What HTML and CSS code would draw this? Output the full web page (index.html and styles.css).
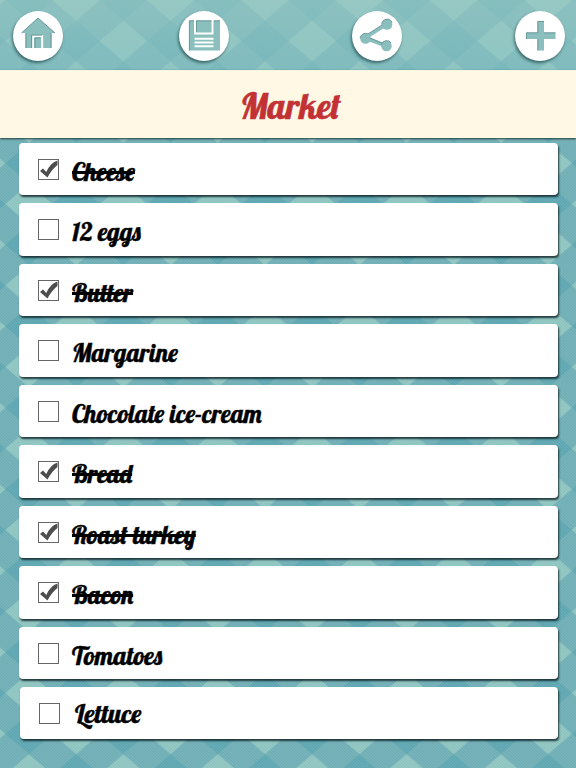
FILE: index.html
```html
<!DOCTYPE html>
<html lang="en">
<head>
<meta charset="utf-8">
<title>Market</title>
<link rel="stylesheet" href="styles.css">
</head>
<body>
<svg class="backdrop" width="576" height="768" aria-hidden="true">
  <defs>
    <pattern id="gingham" x="29" y="41" width="94.4" height="81.5" patternUnits="userSpaceOnUse" viewBox="0 0 94 82" preserveAspectRatio="none">
      <rect width="94" height="82" fill="#71afb6"/>
      <path fill="#8fc5c1" d="M47 20.500L70.500 41L47 61.500L23.500 41ZM0 0H23.500L0 20.500ZM94 0V20.500L70.500 0ZM0 82V61.500L23.500 82ZM94 82H70.500L94 61.500Z"/>
      <path fill="#5fa7b2" d="M23.500 0H70.500L47 20.500ZM23.500 82L47 61.500L70.500 82ZM0 20.500L23.500 41L0 61.500ZM94 20.500V61.500L70.500 41Z"/>
    </pattern>
    <pattern id="weave" width="3" height="3" patternUnits="userSpaceOnUse">
      <path d="M0 0L3 3" stroke="#fff" stroke-opacity=".09" stroke-width=".8"/>
    </pattern>
  </defs>
  <rect width="576" height="768" fill="url(#gingham)"/>
  <rect width="576" height="768" fill="url(#weave)"/>
</svg>
<header class="toolbar">
  <button class="tool" aria-label="Home"><svg viewBox="0 0 50 50"><path class="cut" d="M25 7L42 22H38.500V37H12.500V22H8.500Z"/><path class="frame" d="M20.200 37V25.200H29.200V37"/><path class="shade" d="M42 22L25 7L8.500 22M13 22V37M18.500 37V24H29M38 22V37M22 37V27H27.500"/></svg></button>
  <button class="tool" aria-label="Save"><svg viewBox="0 0 50 50"><path class="cut" d="M10 9.500H41V39.500H10Z"/><path class="frame" d="M16 8V22.500H33.500V8M15.500 27.700H34.500M15.500 31.500H34.500M15.500 35.300H34.500"/><path class="shade" d="M10.400 39.500V9.900H15M17.500 21V9.900H32.500M35 9.900H41"/></svg></button>
  <button class="tool" aria-label="Share"><svg viewBox="0 0 50 50"><g class="cut"><path class="link" d="M35 13L13 27L34.500 35"/><circle cx="35" cy="13.500" r="5.300"/><circle cx="13.500" cy="27.500" r="5.300"/><circle cx="34.500" cy="35" r="5.300"/></g><path class="shade" d="M29.800 13.500A5.300 5.300 0 0 1 40 11.500M8.200 27.500A5.300 5.300 0 0 1 16 23L30 14M29.500 33.500A5.300 5.300 0 0 1 39 32M18 27L30 32"/></svg></button>
  <button class="tool" aria-label="Add"><svg viewBox="0 0 50 50"><path class="cut" d="M22.500 10H29V21.500H40.500V28H29V39.500H22.500V28H11V21.500H22.500Z"/><path class="shade" d="M11.400 28V21.900H22.900V10.400H29M29 21.900H40.500M22.900 28V39.500"/></svg></button>
</header>
<h1 class="title">Market</h1>
<ul class="list">
  <li class="item done"><span class="box"><svg viewBox="0 0 21 21"><path d="M2 12L5 9.500L8.300 13Q12.500 3.500 19.500 1.500V6Q14 10 9.500 18.500Z"/></svg></span><span class="label">Cheese</span></li>
  <li class="item"><span class="box"></span><span class="label">12 eggs</span></li>
  <li class="item done"><span class="box"><svg viewBox="0 0 21 21"><path d="M2 12L5 9.500L8.300 13Q12.500 3.500 19.500 1.500V6Q14 10 9.500 18.500Z"/></svg></span><span class="label">Butter</span></li>
  <li class="item"><span class="box"></span><span class="label">Margarine</span></li>
  <li class="item"><span class="box"></span><span class="label">Chocolate ice-cream</span></li>
  <li class="item done"><span class="box"><svg viewBox="0 0 21 21"><path d="M2 12L5 9.500L8.300 13Q12.500 3.500 19.500 1.500V6Q14 10 9.500 18.500Z"/></svg></span><span class="label">Bread</span></li>
  <li class="item done"><span class="box"><svg viewBox="0 0 21 21"><path d="M2 12L5 9.500L8.300 13Q12.500 3.500 19.500 1.500V6Q14 10 9.500 18.500Z"/></svg></span><span class="label">Roast turkey</span></li>
  <li class="item done"><span class="box"><svg viewBox="0 0 21 21"><path d="M2 12L5 9.500L8.300 13Q12.500 3.500 19.500 1.500V6Q14 10 9.500 18.500Z"/></svg></span><span class="label">Bacon</span></li>
  <li class="item"><span class="box"></span><span class="label">Tomatoes</span></li>
  <li class="item last"><span class="box"></span><span class="label">Lettuce</span></li>
</ul>
</body>
</html>
```

FILE: styles.css
```css
* { box-sizing: border-box; }
body {
  margin: 0;
  width: 576px;
  height: 768px;
  overflow: hidden;
  font-family: Lobster, "Liberation Serif", serif;
  font-weight: normal;
}
.backdrop { position: absolute; inset: 0; z-index: -1; }
.toolbar {
  height: 70px;
  padding: 11px 11px 0 13px;
  display: grid;
  grid-template-columns: 166px 173px 163px 50px;
  background: linear-gradient(rgba(153, 201, 196, .66), rgba(140, 196, 195, .54));
}
.tool {
  width: 50px;
  height: 50px;
  padding: 0;
  border: 0;
  border-radius: 50%;
  background: #fff;
  box-shadow: -1px 2px 3px rgba(20, 60, 65, .65);
}
.tool svg { display: block; width: 50px; height: 50px; }
.cut { fill: #8bbfbe; }
.cut .link { fill: none; stroke: #8bbfbe; stroke-width: 3.5; }
.frame { fill: none; stroke: #fff; stroke-width: 1.9; }
.shade { fill: none; stroke: #6b9799; stroke-width: 1; }
.title {
  margin: 0;
  height: 68px;
  padding: 2px 0 0 5px;
  line-height: 68px;
  text-align: center;
  font-size: 35px;
  font-weight: normal;
  color: #c23235;
  -webkit-text-stroke: .6px #c23235;
  background: #fff8e5;
  box-shadow: 0 1px 2px rgba(30, 45, 45, .9);
}
.list {
  list-style: none;
  margin: 0;
  padding: 4.5px 18.5px 0 19px;
  display: grid;
  grid-auto-rows: 52.5px;
  gap: 8px;
}
.item {
  display: flex;
  align-items: flex-start;
  gap: 13px;
  padding: 16px 0 0 19px;
  border-radius: 4px;
  background: #fff;
  box-shadow: 1px 2px 2px rgba(15, 35, 40, .85);
}
.last { margin: -.5px 0 .5px 1px; }
.box { flex: none; width: 21px; height: 21px; border: 1.5px solid #666; }
.box svg { display: block; width: 21px; height: 21px; margin: -1px; fill: #4d4d4d; }
.label {
  font-size: 25px;
  line-height: 26px;
  white-space: nowrap;
  color: #000;
  -webkit-text-stroke: .45px #000;
}
.done .label { text-decoration: line-through; text-decoration-thickness: 2.5px; }
.last .label { margin: -2px 0 0 2px; font-size: 26px; }
```
